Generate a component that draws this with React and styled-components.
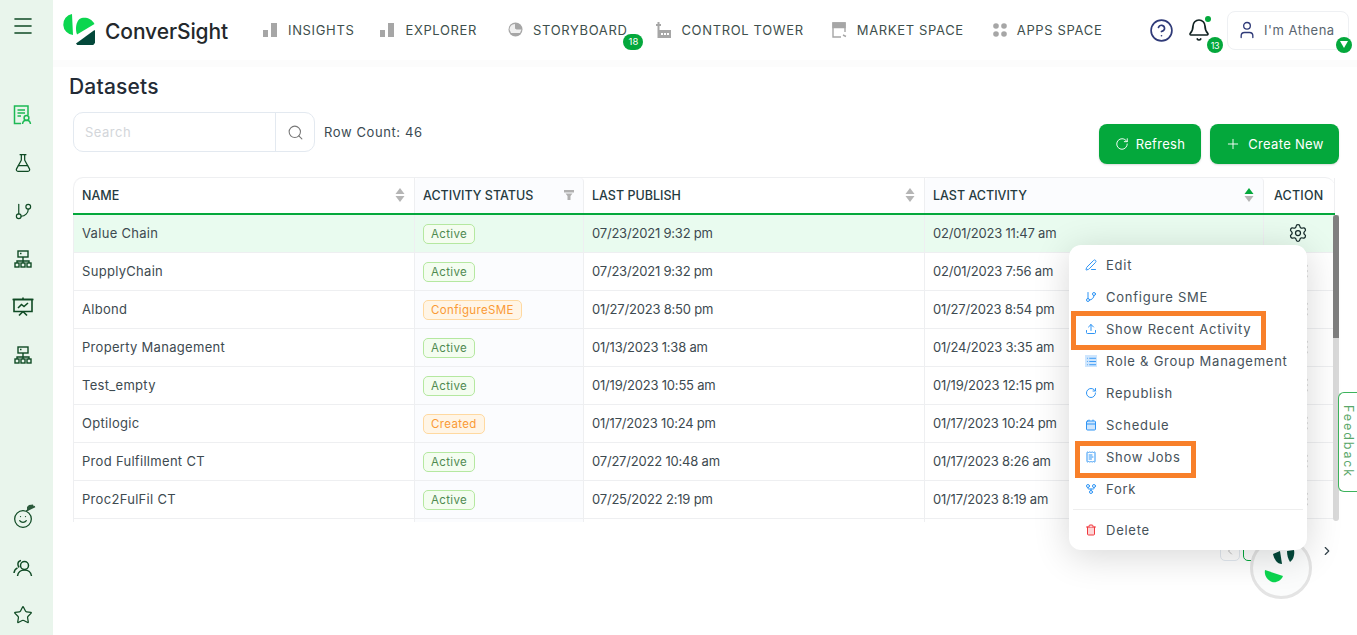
import React from 'react';
import styled, { createGlobalStyle } from 'styled-components';
import {
  Menu as MenuIcon, FlaskConical, GitBranch, Star, Search, RotateCw, Plus,
  User, Bell, CircleHelp, Settings, EllipsisVertical, PenLine, Upload, List, Calendar, ReceiptText,
  GitFork, Trash2, ChevronRight, ChevronLeft, Smile,
} from 'lucide-react';

const FONT = 'Inter, "Open Sans", "Liberation Sans", sans-serif';
const DARK_GREEN = '#0f4a24';
const GREEN = '#04a83c';

const GlobalStyle = createGlobalStyle`
  html, body { margin: 0; padding: 0; height: 100%; overflow: hidden; background: #fff; }
  body { font-family: ${FONT}; color: #3b4a52; }
  * { box-sizing: border-box; }
`;

const Shell = styled.div`
  display: flex;
  width: 1357px;
  height: 635px;
  position: relative;
  overflow: hidden;
`;

const Sidebar = styled.aside`
  width: 53px;
  flex: none;
  background: #e9f5ec;
  display: flex;
  flex-direction: column;
  align-items: flex-start;
  padding: 14px 0 0 11px;
`;

const SideGroup = styled.div`
  display: flex;
  flex-direction: column;
  align-items: center;
  gap: 24px;
  margin-top: ${props => props.$top}px;
`;

const SideSlot = styled.div`
  width: 24px;
  height: 24px;
  display: flex;
  align-items: center;
  justify-content: center;
  color: ${props => props.$active ? '#1db954' : DARK_GREEN};
`;

const Main = styled.main`
  flex: 1;
  min-width: 0;
  display: flex;
  flex-direction: column;
`;

const TopBar = styled.header`
  height: 60px;
  flex: none;
  display: flex;
  align-items: center;
  padding-left: 9px;
  background: #fff;
  box-shadow: 0 7px 0 #fcfcfc;
`;

const Logo = styled.div`
  display: flex;
  align-items: center;
  gap: 10px;
  width: 201px;
  flex: none;
  margin-top: -2px;
`;

const LogoText = styled.span`
  font-size: 21px;
  font-weight: 500;
  letter-spacing: -0.1px;
  color: #23282b;
  position: relative;
  top: 2px;
`;

const Nav = styled.nav`
  display: flex;
  align-items: center;
  margin-top: -1px;
`;

const NavItem = styled.div`
  display: flex;
  align-items: center;
  gap: 10px;
  position: relative;
  font-size: 13px;
  letter-spacing: 0.65px;
  color: #3e4f4c;
  white-space: nowrap;
  height: 20px;
  margin-right: ${props => props.$gap}px;
`;

const NavCount = styled.span`
  position: absolute;
  right: -16px;
  top: 14px;
  width: 20px;
  height: 16px;
  border-radius: 8px;
  background: ${GREEN};
  color: #fff;
  font-size: 9.5px;
  letter-spacing: 0;
  display: flex;
  align-items: center;
  justify-content: center;
`;

const TopRight = styled.div`
  margin-left: auto;
  display: flex;
  align-items: center;
  padding-right: 8px;
`;

const BellWrap = styled.div`
  position: relative;
  width: 24px;
  height: 24px;
  margin-left: 13px;
  margin-right: 16px;
  color: #122;
`;

const BellDot = styled.span`
  position: absolute;
  right: 0;
  top: -2px;
  width: 6px;
  height: 6px;
  border-radius: 50%;
  background: ${GREEN};
`;

const BellCount = styled.span`
  position: absolute;
  left: 20px;
  top: 19px;
  width: 16px;
  height: 16px;
  border-radius: 50%;
  background: ${GREEN};
  color: #fff;
  font-size: 9px;
  letter-spacing: -0.4px;
  display: flex;
  align-items: center;
  justify-content: center;
`;

const UserBox = styled.div`
  position: relative;
  width: 122px;
  height: 39px;
  border: 1px solid #eef0f3;
  border-radius: 8px;
  display: flex;
  align-items: center;
  gap: 7px;
  padding-left: 9px;
  font-size: 13px;
  letter-spacing: 0.5px;
  color: #5a6670;
  white-space: nowrap;
`;

const UserCaret = styled.span`
  position: absolute;
  right: -4px;
  bottom: -4px;
  width: 16px;
  height: 16px;
  border-radius: 50%;
  background: ${GREEN};
  display: flex;
  align-items: center;
  justify-content: center;
`;

const Content = styled.div`
  flex: 1;
  display: flex;
  flex-direction: column;
  padding: 14px 0 0 20px;
  min-height: 0;
`;

const Title = styled.h1`
  margin: 0 0 0 -4px;
  font-size: 21px;
  line-height: 25px;
  font-weight: 500;
  letter-spacing: 0.2px;
  color: #232b36;
`;

const Toolbar = styled.div`
  display: flex;
  justify-content: space-between;
  height: 52px;
  margin-top: 13px;
  width: 1266px;
`;

const SearchGroup = styled.div`
  display: flex;
  align-items: flex-start;
  gap: 9px;
`;

const SearchBox = styled.div`
  width: 242px;
  height: 40px;
  border: 1px solid #e3e9f0;
  border-radius: 10px;
  display: flex;
`;

const SearchInput = styled.div`
  flex: 1;
  padding-left: 11px;
  font-size: 13px;
  letter-spacing: 0.5px;
  color: #d3d6da;
  line-height: 38px;
`;

const SearchButton = styled.div`
  width: 39px;
  border-left: 1px solid #e3e9f0;
  display: flex;
  align-items: center;
  justify-content: center;
  color: #777;
`;

const RowCount = styled.span`
  font-size: 13px;
  letter-spacing: 0.6px;
  line-height: 40px;
  color: #3b4a52;
`;

const Actions = styled.div`
  display: flex;
  align-items: flex-end;
  gap: 9px;
`;

const PrimaryButton = styled.button`
  height: 40px;
  width: ${props => props.$width}px;
  border: 0;
  border-radius: 8px;
  background: ${GREEN};
  color: #fff;
  font-family: ${FONT};
  font-size: 13px;
  letter-spacing: 0.3px;
  display: flex;
  align-items: center;
  justify-content: center;
  gap: 7px;
  box-shadow: 0 1px 2px rgba(0, 0, 0, 0.15);
`;

const TableWrap = styled.div`
  margin-top: 13px;
  width: 1267px;
`;

const Row = styled.div`
  display: grid;
  grid-template-columns: 342px 169px 341px 339px 71px;
  width: 1262px;
  height: 38px;
  flex: none;
  background: ${props => props.$selected ? '#e9fbef' : 'transparent'};
  border-bottom: ${props => props.$head ? `2px solid ${GREEN}` : '1px solid #eeeff1'};
`;

const HeadRow = styled(Row)`
  border-top: 1px solid #eeeff1;
  border-radius: 10px 10px 0 0;
`;

const HeadCell = styled.div`
  display: flex;
  align-items: center;
  justify-content: space-between;
  padding: 0 9px 1px ${props => props.$action ? 10 : 8}px;
  font-size: 12.5px;
  font-weight: 500;
  letter-spacing: ${props => props.$action ? '0.2px' : '0'};
  color: #253a40;
  white-space: nowrap;
  background: ${props => props.$tint ? '#fbfcfe' : 'transparent'};
  border-left: ${props => props.$first ? '1px solid #eeeff1' : '0'};
  border-right: 1px solid #eeeff1;
  border-radius: ${props => props.$tint ? '4px 4px 0 0' : props.$first ? '10px 0 0 0' : '0'};
`;

const BodyArea = styled.div`
  display: flex;
  height: 307px;
`;

const BodyRows = styled.div`
  width: 1261px;
  overflow: hidden;
  display: flex;
  flex-direction: column;
`;

const Cell = styled.div`
  display: flex;
  align-items: center;
  justify-content: ${props => props.$center ? 'center' : 'flex-start'};
  padding: 0 ${props => props.$center ? 3 : 0}px 2px ${props => props.$center ? 0 : 8}px;
  font-size: 13px;
  letter-spacing: ${props => props.$date ? '-0.2px' : '0.3px'};
  color: #3d4a50;
  white-space: nowrap;
  background: ${props => props.$tint && !props.$selected ? '#fbfcfe' : 'transparent'};
  border-left: ${props => props.$first ? '1px solid #eeeff1' : '0'};
  border-right: ${props => props.$last ? '0' : '1px solid #eeeff1'};
`;

const RowDots = styled.span`
  display: flex;
  margin-left: 16px;
  color: #aaa;
`;

const Status = styled.span`
  height: 20px;
  margin-top: 2px;
  padding: 0 7px;
  border-radius: 5px;
  font-size: 11.5px;
  letter-spacing: 0.35px;
  line-height: 18px;
  border: 1px solid ${props => props.$warn ? '#ffd9a0' : '#b5e8a0'};
  background: ${props => props.$warn ? '#fff5e6' : '#f4fdf0'};
  color: ${props => props.$warn ? '#fa9a35' : '#4f8a50'};
`;

const ScrollTrack = styled.div`
  width: 6px;
  margin-left: -1px;
  background: #d9d9d9;
  border-radius: 0 0 3px 3px;
  height: 306px;
`;

const ScrollThumb = styled.div`
  height: 123px;
  background: #7f7f7f;
  border-radius: 3px 3px 0 0;
`;

const Pager = styled.div`
  display: flex;
  justify-content: flex-end;
  align-items: center;
  gap: 3px;
  margin-top: 19px;
  width: 1261px;
  height: 20px;
  color: #33424a;
`;

const PagerButton = styled.div`
  width: 20px;
  height: 20px;
  border: 1px solid ${props => props.$active ? GREEN : '#e3e9f0'};
  border-radius: 5px;
  display: flex;
  align-items: center;
  justify-content: center;
  color: #bbb;
  margin-right: ${props => props.$gap || 0}px;
`;

const ActionMenu = styled.div`
  position: absolute;
  left: 1069px;
  top: 245px;
  width: 238px;
  height: 305px;
  background: #fff;
  border-radius: 12px;
  padding: 4px 0;
  box-shadow: 0 6px 36px rgba(0, 0, 0, 0.16);
  z-index: 5;
`;

const MenuItem = styled.div`
  position: relative;
  height: 32px;
  display: flex;
  align-items: center;
  gap: 9px;
  padding-left: 16px;
  font-size: 13px;
  letter-spacing: 0.75px;
  color: #46525a;
  white-space: nowrap;
`;

const MenuIconBox = styled.span`
  width: 12px;
  height: 12px;
  flex: none;
  display: flex;
  align-items: center;
  justify-content: center;
  color: ${props => props.$danger ? '#f0393e' : '#2f95f5'};
  background: ${props => props.$fill ? '#cfe6fd' : 'transparent'};
`;

const MenuDivider = styled.div`
  height: 1px;
  margin: 4px 4px;
  background: #eeeeee;
`;

const Highlight = styled.span`
  position: absolute;
  left: ${props => props.$left}px;
  top: ${props => props.$top}px;
  width: ${props => props.$width}px;
  height: ${props => props.$height}px;
  border: 5px solid #f8802a;
  pointer-events: none;
`;

const Feedback = styled.div`
  position: absolute;
  left: 1338px;
  top: 392px;
  width: 19px;
  height: 100px;
  border: 1px solid #3db35c;
  border-right: 0;
  border-radius: 6px 0 0 6px;
  background: #fff;
  color: #5aa76a;
  font-size: 12.5px;
  line-height: 17px;
  letter-spacing: 1.9px;
  writing-mode: vertical-rl;
  padding-top: 12px;
  z-index: 4;
`;

const ChatBubble = styled.div`
  position: absolute;
  left: 1250px;
  top: 537px;
  width: 62px;
  height: 62px;
  border-radius: 50%;
  background: #fbfcfc;
  border: 3px solid #e4e4e4;
  display: flex;
  align-items: center;
  justify-content: center;
  z-index: 3;
`;

const MascotWrap = styled.span`
  position: relative;
  display: flex;
`;

const MascotHat = styled.svg`
  position: absolute;
  right: -3px;
  top: -5px;
`;

const rows = [
  ['Value Chain', 'Active', '07/23/2021 9:32 pm', '02/01/2023 11:47 am'],
  ['SupplyChain', 'Active', '07/23/2021 9:32 pm', '02/01/2023 7:56 am'],
  ['Albond', 'ConfigureSME', '01/27/2023 8:50 pm', '01/27/2023 8:54 pm'],
  ['Property Management', 'Active', '01/13/2023 1:38 am', '01/24/2023 3:35 am'],
  ['Test_empty', 'Active', '01/19/2023 10:55 am', '01/19/2023 12:15 pm'],
  ['Optilogic', 'Created', '01/17/2023 10:24 pm', '01/17/2023 10:24 pm'],
  ['Prod Fulfillment CT', 'Active', '07/27/2022 10:48 am', '01/17/2023 8:26 am'],
  ['Proc2FulFil CT', 'Active', '07/25/2022 2:19 pm', '01/17/2023 8:19 am'],
  ['', '', '', ''],
];

const LogoMark = () => (
  <svg width="33" height="31" viewBox="0 0 33 31">
    <path d="M10 0A10.6 10.6 0 0 0 11 21Z" fill="#0bd64f" />
    <path d="M17.5 5C21 2.5 29 3 32.5 10L15 20.5C13 15 14 8 17.5 5Z" fill="#0bd64f" />
    <path d="M14 29.5L32.5 16A11 11 0 0 1 14 29.5Z" fill="#03483a" />
  </svg>
);

const BarsIcon = () => (
  <svg width="15" height="14" viewBox="0 0 15 14" fill="#a6a6a6">
    <rect x="0" y="7" width="5" height="7" />
    <rect x="8" y="0" width="6" height="14" />
  </svg>
);

const GaugeIcon = () => (
  <svg width="15" height="15" viewBox="0 0 15 15">
    <circle cx="7.5" cy="7.5" r="7" fill="#a6a6a6" />
    <path d="M1.5 7.5a6 6 0 0 1 5.5-5.5v4.5l1.5 1h5L12 11H3Z" fill="#f0f0f0" />
  </svg>
);

const TowerIcon = () => (
  <svg width="15" height="16" viewBox="0 0 15 16" fill="#a6a6a6">
    <rect x="0" y="2" width="5" height="2" />
    <rect x="1.5" y="0" width="2" height="16" />
    <path d="M3 8h12v8H3z" />
    <rect x="5" y="11" width="2" height="2" fill="#fff" />
    <rect x="8" y="11" width="2" height="2" fill="#fff" />
    <rect x="11" y="11" width="2" height="2" fill="#fff" />
  </svg>
);

const MarketIcon = () => (
  <svg width="15" height="16" viewBox="0 0 15 16" fill="none" stroke="#a6a6a6" strokeWidth="1.4">
    <path d="M1 5V1h12v4M1 5v10h8M13 5v5" />
    <path d="M1 1h12v4.5H1z" fill="#a6a6a6" />
    <path d="M11 13l3 1.5" />
  </svg>
);

const AppsIcon = () => (
  <svg width="14" height="14" viewBox="0 0 14 14" fill="#a6a6a6">
    <circle cx="3" cy="3" r="2.8" />
    <circle cx="11" cy="3" r="2.8" />
    <circle cx="3" cy="11" r="2.8" />
    <circle cx="11" cy="11" r="2.8" />
  </svg>
);

const ReportIcon = () => (
  <svg width="20" height="20" viewBox="0 0 20 20" fill="none" stroke="currentColor" strokeWidth="1.5">
    <path d="M8 18.5H1.5V1h13.5v9" />
    <path d="M4.5 5h7.5M4.5 8h7.5M4.5 11h3.5" />
    <circle cx="13.5" cy="13" r="2.4" />
    <path d="M9.5 19c.3-2.5 2-3.7 4-3.7s3.7 1.2 4 3.7" />
  </svg>
);

const OrgIcon = () => (
  <svg width="18" height="18" viewBox="0 0 18 18" fill="none" stroke="currentColor" strokeWidth="1.4">
    <rect x="4" y="1" width="10" height="6" />
    <path d="M6 3.5h1.5" />
    <path d="M9 7v4M3 13v-2h12v2M9 11v2" />
    <rect x="1" y="13" width="4" height="4" />
    <rect x="7" y="13" width="4" height="4" />
    <rect x="13" y="13" width="4" height="4" />
  </svg>
);

const BoardIcon = () => (
  <svg width="22" height="20" viewBox="0 0 22 20" fill="none" stroke="currentColor" strokeWidth="1.6">
    <path d="M2 2.5h18v12H2z" />
    <path d="M0.5 2.5h21" />
    <path d="M11 0.5v2M11 14.5l-4 4M11 14.5l4 4" />
    <path d="M6 11l3.5-3.5 2.5 2L16 6" />
  </svg>
);

const TeamIcon = () => (
  <svg width="20" height="20" viewBox="0 0 20 20" fill="none" stroke="currentColor" strokeWidth="1.5">
    <circle cx="11.5" cy="8.5" r="4" />
    <path d="M4.5 19c.4-3.6 3.4-6 7-6s6.6 2.4 7 6" />
    <path d="M8 3.5a4 4 0 0 0-3 4.5c.1 1 .6 1.8 1.2 2.4" />
    <path d="M1 16c.2-2.3 1.5-4.2 3.5-5.2" />
  </svg>
);

const MascotIcon = () => (
  <MascotWrap>
    <Smile size={20} strokeWidth={1.5} />
    <MascotHat width="10" height="10" viewBox="0 0 10 10">
      <path d="M1 7l7-4-1-2.5L3 1 1 3Z" fill="#2c5a3c" />
      <path d="M0 7l9-4.5" stroke="#2c5a3c" strokeWidth="1.4" />
    </MascotHat>
  </MascotWrap>
);

const SortIcon = ({ active }) => (
  <svg width="10" height="14" viewBox="0 0 10 14">
    <path d="M5 0l4.5 6h-9z" fill={active ? GREEN : '#b5b5b5'} />
    <path d="M5 14L.5 8h9z" fill="#b5b5b5" />
  </svg>
);

const FilterIcon = () => (
  <svg width="10" height="10" viewBox="0 0 10 10">
    <path d="M0 0h10v2.5H0zM1.5 3.5h7L6.5 6v4h-3V6z" fill="#b0b0b0" />
  </svg>
);

const navItems = [
  { label: 'INSIGHTS', icon: <BarsIcon />, gap: 26 },
  { label: 'EXPLORER', icon: <BarsIcon />, gap: 31 },
  { label: 'STORYBOARD', icon: <GaugeIcon />, gap: 29, count: 18 },
  { label: 'CONTROL TOWER', icon: <TowerIcon />, gap: 28 },
  { label: 'MARKET SPACE', icon: <MarketIcon />, gap: 29 },
  { label: 'APPS SPACE', icon: <AppsIcon />, gap: 0 },
];

const menuItems = [
  { label: 'Edit', icon: <PenLine size={12} /> },
  { label: 'Configure SME', icon: <GitBranch size={12} /> },
  { label: 'Show Recent Activity', icon: <Upload size={12} />, mark: { left: 2, top: -2, width: 195, height: 39 } },
  { label: 'Role & Group Management', icon: <List size={11} />, fill: true },
  { label: 'Republish', icon: <RotateCw size={12} /> },
  { label: 'Schedule', icon: <Calendar size={12} fill="#cfe6fd" /> },
  { label: 'Show Jobs', icon: <ReceiptText size={12} />, mark: { left: 6, top: 0, width: 121, height: 37 } },
  { label: 'Fork', icon: <GitFork size={12} /> },
];

export default function App() {
  return (
    <Shell>
      <GlobalStyle />
      <Sidebar>
        <SideSlot><MenuIcon size={24} strokeWidth={1.6} /></SideSlot>
        <SideGroup $top={65}>
          <SideSlot $active><ReportIcon /></SideSlot>
          <SideSlot><FlaskConical size={20} strokeWidth={1.5} /></SideSlot>
          <SideSlot><GitBranch size={19} strokeWidth={1.5} /></SideSlot>
          <SideSlot><OrgIcon /></SideSlot>
          <SideSlot><BoardIcon /></SideSlot>
          <SideSlot><OrgIcon /></SideSlot>
        </SideGroup>
        <SideGroup $top={140}>
          <SideSlot><MascotIcon /></SideSlot>
          <SideSlot><TeamIcon /></SideSlot>
          <SideSlot><Star size={20} strokeWidth={1.5} /></SideSlot>
        </SideGroup>
      </Sidebar>

      <Main>
        <TopBar>
          <Logo>
            <LogoMark />
            <LogoText>ConverSight</LogoText>
          </Logo>
          <Nav>
            {navItems.map(item => (
              <NavItem key={item.label} $gap={item.gap}>
                {item.icon}
                <span>{item.label}</span>
                {item.count && <NavCount>{item.count}</NavCount>}
              </NavItem>
            ))}
          </Nav>
          <TopRight>
            <CircleHelp size={25} strokeWidth={1.6} color="#2f3a78" />
            <BellWrap>
              <Bell size={24} strokeWidth={1.7} />
              <BellDot />
              <BellCount>13</BellCount>
            </BellWrap>
            <UserBox>
              <User size={20} strokeWidth={1.6} color="#2f3a78" />
              I'm Athena
              <UserCaret>
                <svg width="8" height="7" viewBox="0 0 8 7"><path d="M0 0h8L4 7z" fill="#fff" /></svg>
              </UserCaret>
            </UserBox>
          </TopRight>
        </TopBar>

        <Content>
          <Title>Datasets</Title>
          <Toolbar>
            <SearchGroup>
              <SearchBox>
                <SearchInput>Search</SearchInput>
                <SearchButton><Search size={17} strokeWidth={1.5} /></SearchButton>
              </SearchBox>
              <RowCount>Row Count: 46</RowCount>
            </SearchGroup>
            <Actions>
              <PrimaryButton $width={102}><RotateCw size={14} strokeWidth={1.6} />Refresh</PrimaryButton>
              <PrimaryButton $width={129}><Plus size={16} strokeWidth={1.4} />Create New</PrimaryButton>
            </Actions>
          </Toolbar>

          <TableWrap>
            <HeadRow $head>
              <HeadCell $first>NAME<SortIcon /></HeadCell>
              <HeadCell $tint>ACTIVITY STATUS<FilterIcon /></HeadCell>
              <HeadCell>LAST PUBLISH<SortIcon /></HeadCell>
              <HeadCell $tint>LAST ACTIVITY<SortIcon active /></HeadCell>
              <HeadCell $action>ACTION</HeadCell>
            </HeadRow>
            <BodyArea>
              <BodyRows>
                {rows.map((row, i) => {
                  const selected = i === 0;
                  const warn = row[1] === 'ConfigureSME' || row[1] === 'Created';
                  return (
                    <Row key={i} $selected={selected}>
                      <Cell $first>{row[0]}</Cell>
                      <Cell $tint $selected={selected}>
                        {row[1] && <Status $warn={warn}>{row[1]}</Status>}
                      </Cell>
                      <Cell $date>{row[2]}</Cell>
                      <Cell $date>{row[3]}</Cell>
                      <Cell $center $last>
                        {selected
                          ? <Settings size={20} strokeWidth={1.5} color="#142a2a" />
                          : row[0] && <RowDots><EllipsisVertical size={18} /></RowDots>}
                      </Cell>
                    </Row>
                  );
                })}
              </BodyRows>
              <ScrollTrack><ScrollThumb /></ScrollTrack>
            </BodyArea>
            <Pager>
              <PagerButton><ChevronLeft size={12} /></PagerButton>
              <PagerButton $active $gap={54} />
              <ChevronRight size={14} />
            </Pager>
          </TableWrap>
        </Content>
      </Main>

      <ChatBubble>
        <svg width="34" height="40" viewBox="0 0 34 40">
          <path d="M9 6l7-3 2 13c-5 0-8-5-9-10Z" fill="#03483a" />
          <path d="M23 3l7-1c1 5-1 10-4 12-2-3-3-7-3-11Z" fill="#03483a" />
          <path d="M1 22l18 6c-2 5-7 7-11 6-5-2-8-7-7-12Z" fill="#0bd64f" />
        </svg>
      </ChatBubble>

      <ActionMenu>
        {menuItems.map(item => (
          <MenuItem key={item.label}>
            <MenuIconBox $fill={item.fill}>{item.icon}</MenuIconBox>
            {item.label}
            {item.mark && (
              <Highlight
                $left={item.mark.left}
                $top={item.mark.top}
                $width={item.mark.width}
                $height={item.mark.height}
              />
            )}
          </MenuItem>
        ))}
        <MenuDivider />
        <MenuItem>
          <MenuIconBox $danger><Trash2 size={12} fill="#fdd5d6" /></MenuIconBox>
          Delete
        </MenuItem>
      </ActionMenu>

      <Feedback>Feedback</Feedback>
    </Shell>
  );
}
